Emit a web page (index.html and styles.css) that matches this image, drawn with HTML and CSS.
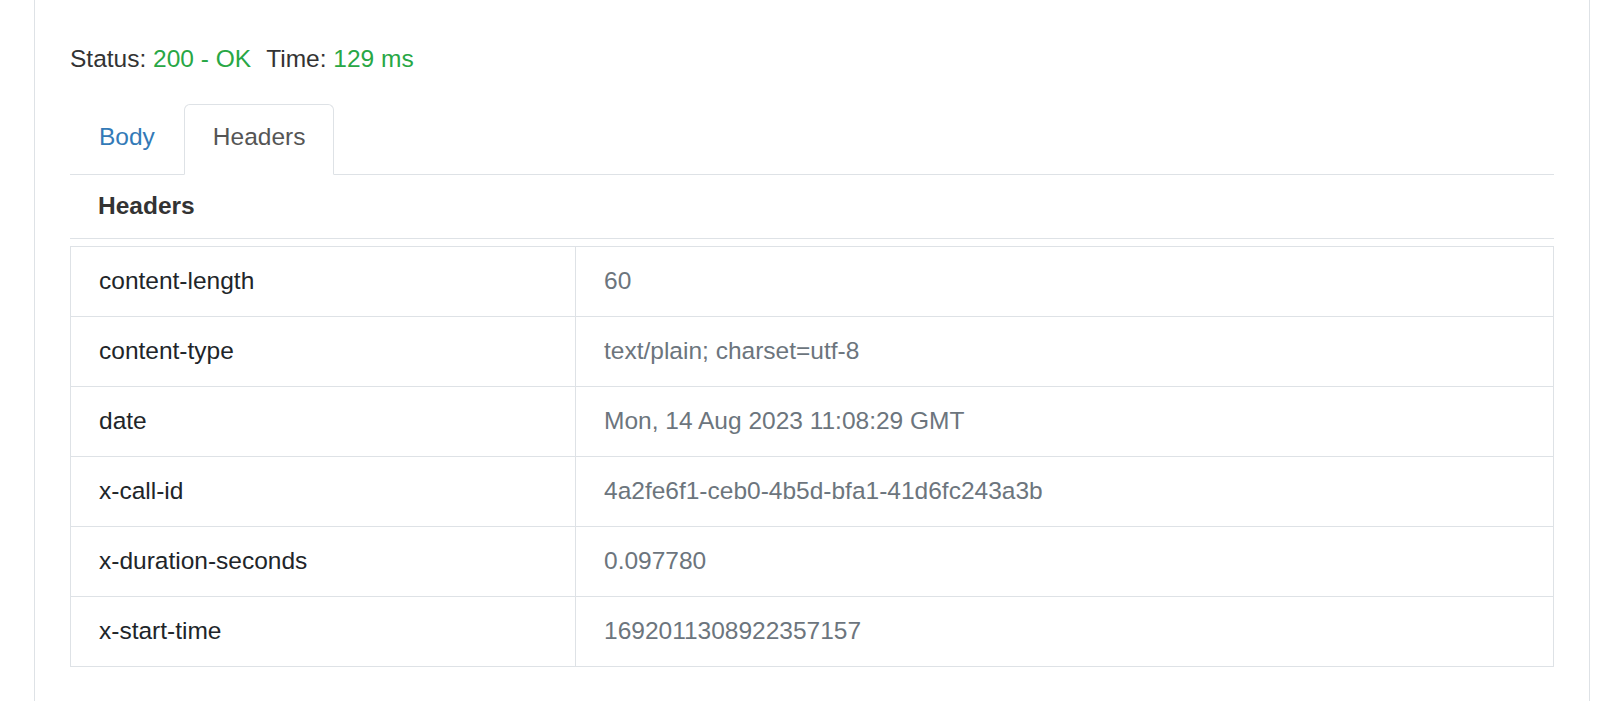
FILE: index.html
```html
<!DOCTYPE html>
<html lang="en">
<head>
<meta charset="utf-8">
<title>Response</title>
<link rel="stylesheet" href="styles.css">
</head>
<body>
<div class="panel">
  <div class="status"><span class="stat">Status: <span class="ok">200 - OK</span></span><span class="stat">Time: <span class="ok">129 ms</span></span></div>
  <ul class="tabs">
    <li class="tab"><a href="#">Body</a></li>
    <li class="tab active"><a href="#">Headers</a></li>
  </ul>
  <div class="pane">
    <div class="pane-title">Headers</div>
    <table class="headers">
      <colgroup><col class="col-key"><col class="col-val"></colgroup>
      <tbody>
        <tr><td class="key">content-length</td><td class="val">60</td></tr>
        <tr><td class="key">content-type</td><td class="val">text/plain; charset=utf-8</td></tr>
        <tr><td class="key">date</td><td class="val">Mon, 14 Aug 2023 11:08:29 GMT</td></tr>
        <tr><td class="key">x-call-id</td><td class="val">4a2fe6f1-ceb0-4b5d-bfa1-41d6fc243a3b</td></tr>
        <tr><td class="key">x-duration-seconds</td><td class="val">0.097780</td></tr>
        <tr><td class="key">x-start-time</td><td class="val">1692011308922357157</td></tr>
      </tbody>
    </table>
  </div>
</div>
</body>
</html>
```

FILE: styles.css
```css
html, body {
  margin: 0;
  padding: 0;
  background: #fff;
}
body {
  font-family: "Liberation Sans", Arial, Helvetica, sans-serif;
  font-size: 24.5px;
  line-height: 34px;
  color: #333;
  overflow: hidden;
  height: 701px;
}
.panel {
  margin-left: 34px;
  width: 1484px;
  padding: 42px 35px 60px;
  border-left: 1px solid #dee2e6;
  border-right: 1px solid #dee2e6;
  min-height: 701px;
}
.status {
  margin: 0 0 28px;
  display: flex;
}
.stat + .stat {
  margin-left: 15px;
}
.ok {
  color: #28a745;
}
.tabs {
  list-style: none;
  margin: 0;
  padding: 0;
  display: flex;
  border-bottom: 1px solid #dee2e6;
}
.tab {
  margin-bottom: -1px;
  margin-right: 0;
}
.tab a {
  display: block;
  padding: 15px 28px 20px;
  line-height: 34px;
  border: 1px solid transparent;
  border-radius: 6px 6px 0 0;
  color: #337ab7;
  text-decoration: none;
}
.tab.active a {
  color: #555;
  background: #fff;
  border-color: #dee2e6;
  border-bottom-color: transparent;
}
.pane-title {
  font-weight: bold;
  padding: 14px 28px 15px;
  border-bottom: 1px solid #dee2e6;
  margin-bottom: 7px;
}
.headers {
  width: 100%;
  border-collapse: collapse;
  table-layout: fixed;
}
.col-key {
  width: 505px;
}
.headers td {
  border: 1px solid #dee2e6;
  padding: 17px 28px 18px;
  line-height: 34px;
  vertical-align: middle;
}
.key {
  color: #212529;
}
.val {
  color: #6c757d;
}
```
